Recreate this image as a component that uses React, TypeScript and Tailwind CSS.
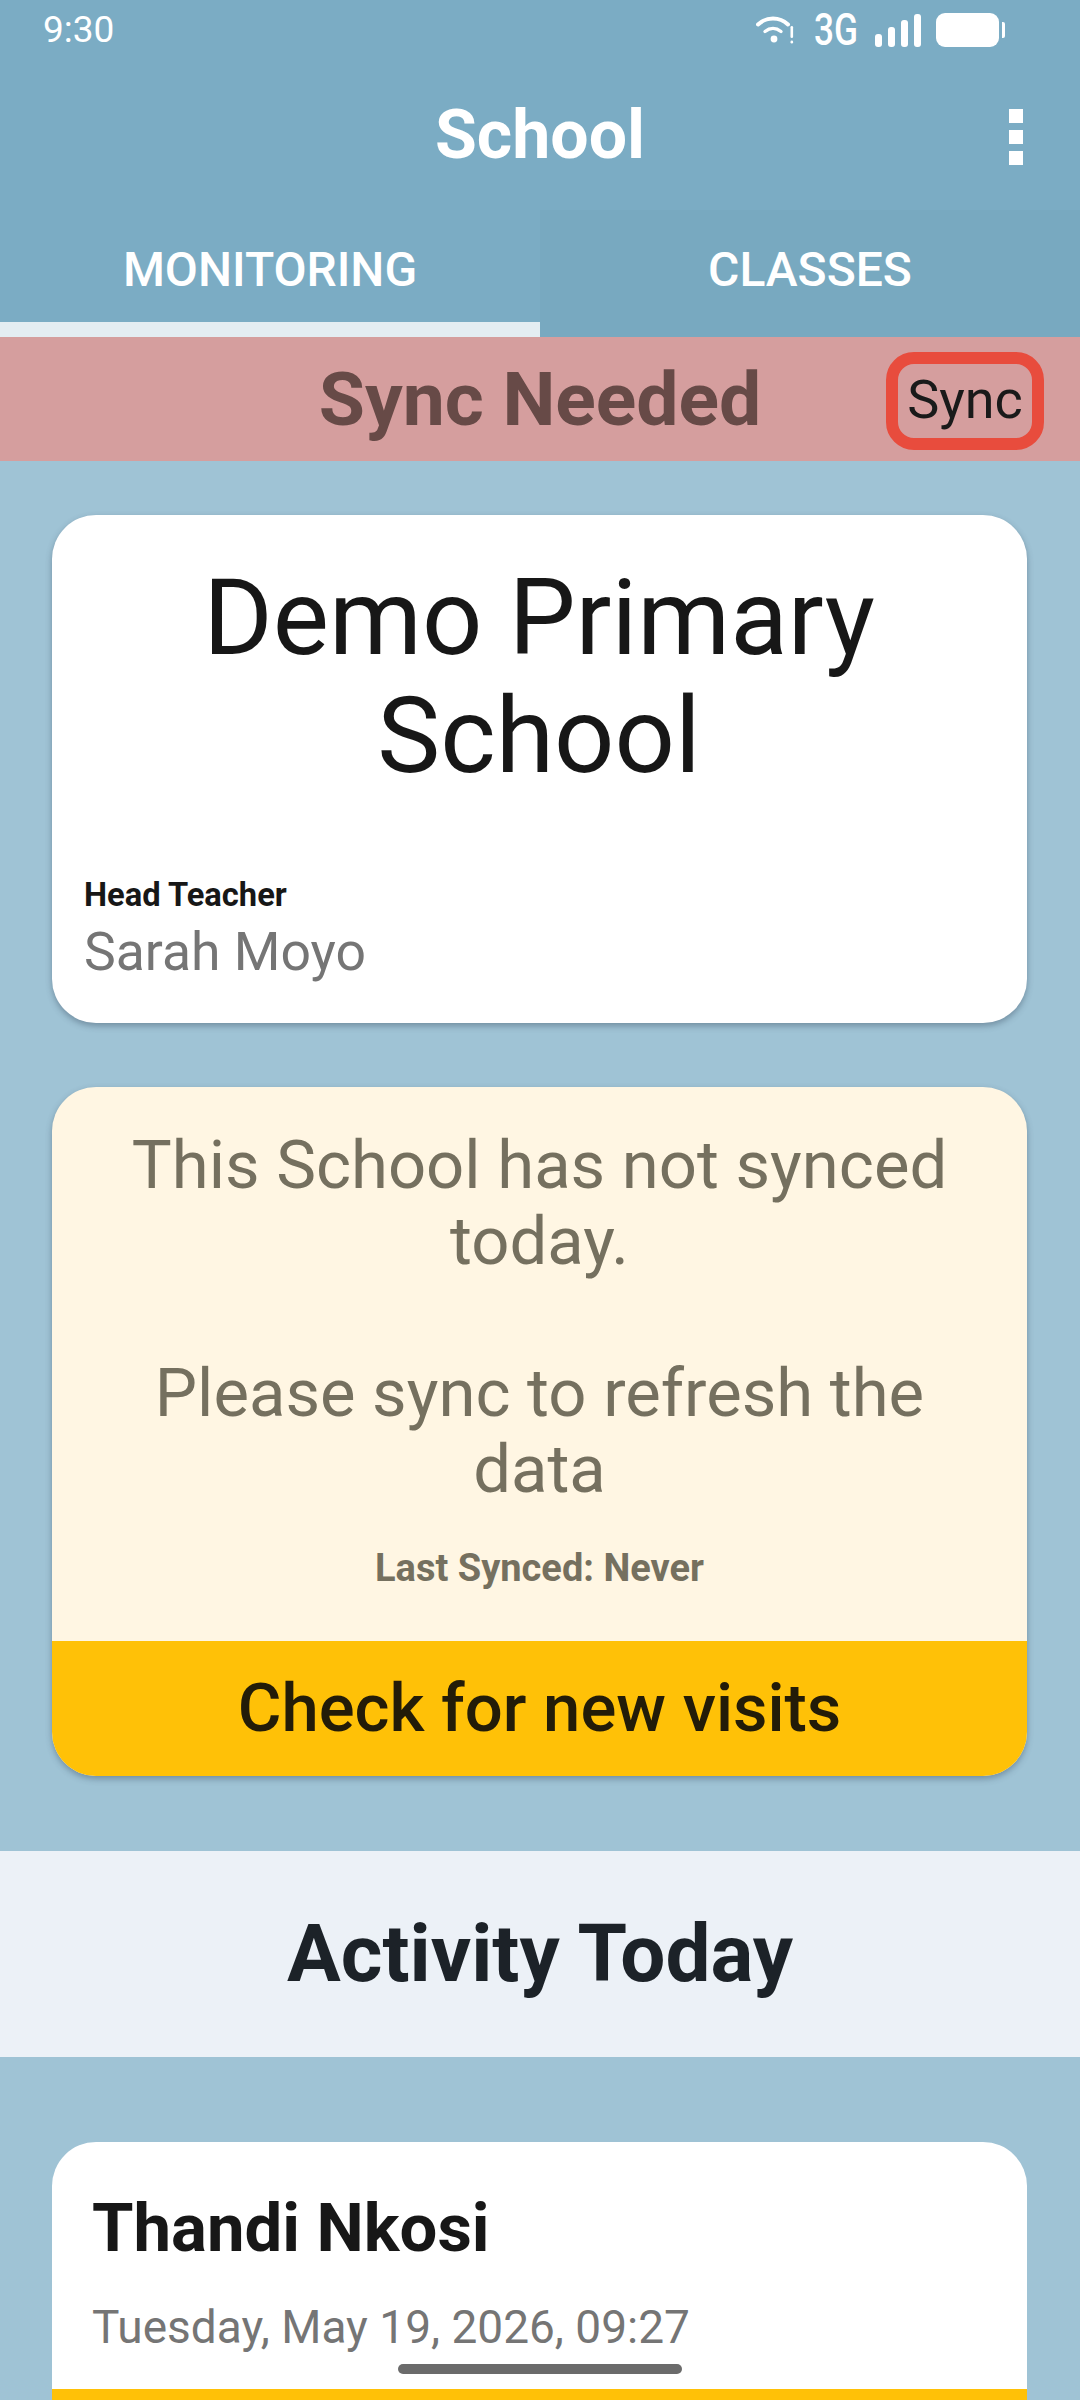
function StatusIcons() {
  return (
    <div className="flex items-center text-white">
      <svg width="38" height="30" viewBox="0 0 38 30" fill="none" className="mr-[20px]">
        <path d="M2 9.5C10.5 1.5 23.5 1.5 32 9.5" stroke="white" strokeWidth="4" strokeLinecap="round" />
        <path d="M9 16.5C14 12.5 20 12.5 25 16.5" stroke="white" strokeWidth="3.4" strokeLinecap="round" />
        <circle cx="18" cy="24" r="3.4" fill="white" />
        <rect x="34.5" y="11" width="2.6" height="12" rx="1.3" fill="white" />
        <rect x="34.5" y="25.5" width="2.6" height="3" rx="1.3" fill="white" />
      </svg>
      <span className="mr-[15px] inline-block w-[46px] origin-left scale-x-[0.8] font-['Roboto',sans-serif] text-[44px] leading-[36px] font-medium whitespace-nowrap">3G</span>
      <svg width="46" height="33" viewBox="0 0 46 33" className="mr-[15px]">
        <rect x="0" y="20" width="7" height="13" rx="3" fill="white" />
        <rect x="13" y="13" width="7" height="20" rx="3" fill="white" />
        <rect x="26" y="6" width="7" height="27" rx="3" fill="white" />
        <rect x="39" y="0" width="7" height="33" rx="3" fill="white" />
      </svg>
      <div className="h-[34px] w-[63px] rounded-[9px] bg-white" />
      <div className="ml-[3px] h-[16px] w-[3px] rounded-r-[2px] bg-white" />
    </div>
  );
}

function Tab({ label, active }: { label: string; active?: boolean }) {
  return (
    <div className={active ? "relative flex h-[127px] flex-1 items-center justify-center pb-[8px]" : "flex h-[127px] flex-1 items-center justify-center bg-[#78a9c0] pb-[8px]"}>
      <span className="text-[48px] font-medium text-white">{label}</span>
      {active ? <div className="absolute right-0 bottom-0 left-0 h-[15px] bg-[#e4edf2]" /> : null}
    </div>
  );
}

function InfoCard() {
  return (
    <div className="mr-[53px] ml-[52px] mt-[54px] h-[508px] rounded-[44px] bg-white pr-[33px] pl-[32px] pt-[44px] shadow-[0_3px_6px_rgba(60,80,100,0.45)]">
      <h1 className="text-center text-[106px] leading-[118px] text-[#171717]">Demo Primary School</h1>
      <p className="mt-[81px] text-[32.7px] leading-[38px] font-bold text-[#171717]">Head Teacher</p>
      <p className="mt-[8px] text-[53.5px] leading-[60px] text-[#757575]">Sarah Moyo</p>
    </div>
  );
}

function SyncCard() {
  return (
    <div className="mr-[53px] ml-[52px] mt-[64px] overflow-hidden rounded-[44px] bg-[#fff6e3] shadow-[0_3px_6px_rgba(60,80,100,0.45)]">
      <div className="h-[554px] px-[50px] pt-[40px] text-center">
        <p className="text-[67px] leading-[76px] text-[#75705f]">
          This School has not synced today.
          <br />
          <br />
          Please sync to refresh the data
        </p>
        <p className="mt-[40px] text-[38px] leading-[42px] font-bold text-[#75705f]">Last Synced: Never</p>
      </div>
      <div className="flex h-[135px] items-center justify-center bg-[#ffc107] text-[67px] font-medium text-[#231c08]">
        Check for new visits
      </div>
    </div>
  );
}

function VisitCard() {
  return (
    <div className="mr-[53px] ml-[52px] mt-[85px] overflow-hidden rounded-[44px] bg-white">
      <div className="h-[247px] pr-[41px] pl-[40px] pt-[48px]">
        <p className="text-[67px] leading-[76px] font-bold text-[#171717]">Thandi Nkosi</p>
        <p className="mt-[35px] text-[46px] leading-[52px] text-[#757575]">Tuesday, May 19, 2026, 09:27</p>
      </div>
      <div className="h-[60px] bg-[#ffc107]" />
    </div>
  );
}

export default function App() {
  return (
    <div className="relative h-[2400px] w-[1080px] overflow-hidden bg-[#9fc3d5] font-['Roboto',sans-serif]">
      <header className="bg-[#7bacc4]">
        <div className="flex h-[60px] items-center justify-between pr-[75px] pl-[43px]">
          <span className="text-[37px] text-white">9:30</span>
          <StatusIcons />
        </div>
        <div className="relative flex h-[150px] items-center justify-center">
          <span className="text-[68px] font-bold text-white">School</span>
          <div className="absolute top-[49px] right-[57px] flex flex-col gap-[7px]">
            <div className="h-[14px] w-[14px] bg-white" />
            <div className="h-[14px] w-[14px] bg-white" />
            <div className="h-[14px] w-[14px] bg-white" />
          </div>
        </div>
        <div className="flex">
          <Tab label="MONITORING" active />
          <Tab label="CLASSES" />
        </div>
      </header>
      <div className="relative flex h-[124px] items-center justify-center bg-[#d59e9e]">
        <span className="text-[75px] font-bold text-[#674a47]">Sync Needed</span>
        <div className="absolute top-[15px] right-[36px] flex h-[98px] w-[158px] items-center justify-center rounded-[28px] border-[12px] border-[#e84c3d] pb-[3px] text-[54px] text-[#1a1a1a]">
          Sync
        </div>
      </div>
      <InfoCard />
      <SyncCard />
      <div className="mt-[75px] flex h-[206px] items-center justify-center bg-[#ecf1f7] text-[80px] font-bold text-[#1c2228]">
        Activity Today
      </div>
      <VisitCard />
      <div className="absolute top-[2364px] left-[398px] h-[10px] w-[284px] rounded-[5px] bg-[#6b6b6b]" />
    </div>
  );
}
